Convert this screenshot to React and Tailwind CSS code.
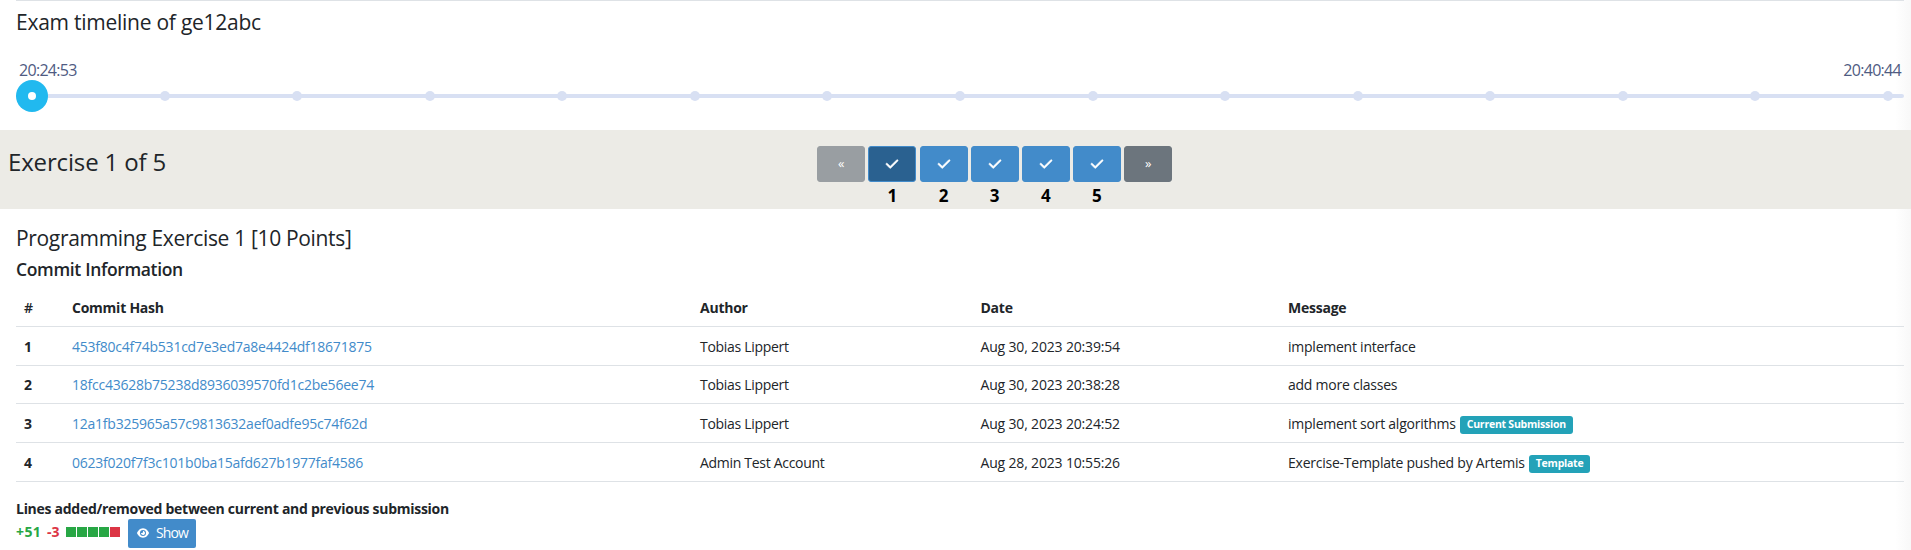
import React from 'react';
import clsx from 'clsx';
import { FaCheck, FaEye } from 'react-icons/fa6';

const TIMELINE_STEPS = 15;

const EXERCISES = [1, 2, 3, 4, 5];

const COMMITS = [
  {
    hash: '453f80c4f74b531cd7e3ed7a8e4424df18671875',
    author: 'Tobias Lippert',
    date: 'Aug 30, 2023 20:39:54',
    message: 'implement interface',
  },
  {
    hash: '18fcc43628b75238d8936039570fd1c2be56ee74',
    author: 'Tobias Lippert',
    date: 'Aug 30, 2023 20:38:28',
    message: 'add more classes',
  },
  {
    hash: '12a1fb325965a57c9813632aef0adfe95c74f62d',
    author: 'Tobias Lippert',
    date: 'Aug 30, 2023 20:24:52',
    message: 'implement sort algorithms',
    badge: 'Current Submission',
  },
  {
    hash: '0623f020f7f3c101b0ba15afd627b1977faf4586',
    author: 'Admin Test Account',
    date: 'Aug 28, 2023 10:55:26',
    message: 'Exercise-Template pushed by Artemis',
    badge: 'Template',
  },
];

const ROW =
  'grid grid-cols-[48px_628px_280.5px_307.5px_1fr] h-[38.67px] items-center pl-2 pt-[1.5px] border-b border-[#dee2e6]';

function Timeline() {
  return (
    <section className="relative ml-4 mr-[7px] h-[130px] border-t border-[#dee2e6] pt-[7px]">
      <h4 className="text-[21px] leading-7 tracking-[-0.25px]">Exam timeline of ge12abc</h4>
      <div className="mt-[22px] flex h-[22px] justify-between pl-[3px] pr-[3px] text-base leading-6 tracking-[-0.7px] text-[#4f5b82]">
        <span>20:24:53</span>
        <span>20:40:44</span>
      </div>
      <div className="relative flex h-8 justify-between">
        <div className="absolute inset-x-0 top-3.5 h-1 rounded-full bg-[#d8e0f3]" />
        {Array.from({ length: TIMELINE_STEPS }, (_, i) => (
          <div key={i} className="relative flex size-8 items-center justify-center">
            {i === 0 ? (
              <div className="flex size-8 items-center justify-center rounded-full bg-[#21b9ef]">
                <div className="size-2 rounded-full bg-white" />
              </div>
            ) : (
              <div className="size-2.5 rounded-full bg-[#d8e0f3]" />
            )}
          </div>
        ))}
      </div>
    </section>
  );
}

function NavButton({ className, label, children }) {
  return (
    <div className="flex flex-col items-center">
      <button
        className={clsx(
          'flex h-9 w-12 items-center justify-center rounded-[3px] border text-[13px] text-white',
          className
        )}
      >
        {children}
      </button>
      {label && <span className="mt-0.5 text-[17px] font-bold leading-6 text-black">{label}</span>}
    </div>
  );
}

function ExerciseNav() {
  return (
    <section className="relative flex h-[79px] bg-[#ecebe6] pl-2 pt-4">
      <h3 className="-mt-0.5 w-[809.2px] text-2xl leading-9 tracking-[-0.15px]">Exercise 1 of 5</h3>
      <div className="flex gap-[3.17px]">
        <NavButton className="border-[#999ea2] bg-[#999ea2]">«</NavButton>
        {EXERCISES.map((n) => (
          <NavButton
            key={n}
            label={n}
            className={n === 1 ? 'border-[#428bca] bg-[#2a6190]' : 'border-[#428bca] bg-[#428bca]'}
          >
            <FaCheck size={14} className="stroke-white stroke-[18px]" />
          </NavButton>
        ))}
        <NavButton className="border-[#6c757d] bg-[#6c757d]">»</NavButton>
      </div>
    </section>
  );
}

function CommitTable() {
  return (
    <div className="mt-[7.33px] text-sm tracking-[-0.24px]">
      <div className={clsx(ROW, 'font-bold')}>
        <span className="font-semibold">#</span>
        <span>Commit Hash</span>
        <span>Author</span>
        <span>Date</span>
        <span>Message</span>
      </div>
      {COMMITS.map((c, i) => (
        <div key={c.hash} className={ROW}>
          <span className="font-bold">{i + 1}</span>
          <a className="text-[#428bca]">{c.hash}</a>
          <span className="tracking-[-0.3px]">{c.author}</span>
          <span className="tracking-[-0.17px]">{c.date}</span>
          <span className="flex items-center gap-1">
            {c.message}
            {c.badge && (
              <span className="mt-0.5 h-[18px] rounded-[3px] bg-[#23a2b8] px-[7px] text-[10.5px] font-bold leading-[17px] text-white">
                {c.badge}
              </span>
            )}
          </span>
        </div>
      ))}
    </div>
  );
}

function DiffStats() {
  return (
    <div className="mt-4 text-sm">
      <div className="font-bold leading-[21px] tracking-[-0.28px]">
        Lines added/removed between current and previous submission
      </div>
      <div className="flex items-start">
        <span className="mt-0.5 w-[31px] font-bold leading-[21px] text-[#28a745] tracking-[0.4px]">+51</span>
        <span className="mt-0.5 w-[19px] font-bold leading-[21px] text-[#dc3545]">-3</span>
        <div className="mt-2 flex gap-px">
          {[0, 1, 2, 3].map((n) => (
            <span key={n} className="size-2.5 bg-[#28a745]" />
          ))}
          <span className="size-2.5 bg-[#dc3545]" />
        </div>
        <button className="ml-2 flex h-[29px] w-[68px] items-center gap-[7px] rounded-[2px] bg-[#428bca] pl-[9px] tracking-[-0.9px] text-white">
          <FaEye size={12} />
          Show
        </button>
      </div>
    </div>
  );
}

export default function App() {
  return (
    <div className="relative h-[550px] overflow-hidden bg-white font-['Open_Sans',sans-serif] text-[#212529]">
      <div className="absolute inset-y-0 right-0 w-4 bg-linear-to-r from-white to-[#f8f8f8]" />
      <Timeline />
      <ExerciseNav />
      <section className="relative ml-4 mr-[7px] pt-[15px]">
        <h4 className="text-[21px] leading-7 tracking-[-0.33px]">Programming Exercise 1 [10 Points]</h4>
        <h5 className="mt-[5px] text-[17.5px] font-semibold leading-6 tracking-[-0.34px]">Commit Information</h5>
        <CommitTable />
        <DiffStats />
      </section>
    </div>
  );
}
